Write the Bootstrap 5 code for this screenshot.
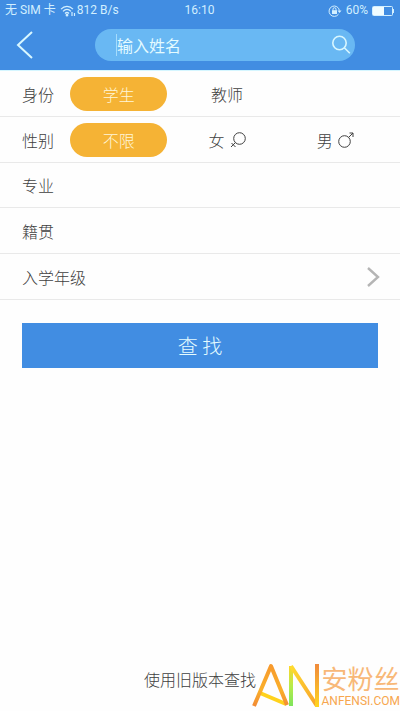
<!DOCTYPE html>
<html lang="zh-CN">
<head>
<meta charset="utf-8">
<meta name="viewport" content="width=device-width, initial-scale=1">
<title>查找</title>
<link href="https://cdn.jsdelivr.net/npm/bootstrap@5.3.0/dist/css/bootstrap.min.css" rel="stylesheet">
<style>
  body { font-family: "Noto Sans CJK SC", sans-serif; font-size: 16px; font-weight: 300; line-height: 24px; color: #404040; background: #fefefe; }
  .btn { font-size: 16px; font-weight: 300; }
  .top-area { background: #418de2; border-bottom: 1px solid #d5f6ff; }
  .status-line { height: 21px; padding: 0 6px 0 5px; font-family: Roboto, "Noto Sans CJK SC", sans-serif; font-size: 12px; font-weight: 400; line-height: 21px; color: #d2efff; display: grid; grid-template-columns: 1fr auto 1fr; }
  .search-line { height: 49px; padding: 0 45px 1px 16px; }
  .back-btn { width: 79px; color: #d8f7ff; }
  .search-pill { height: 32px; padding: 0 4px 0 21px; background: #69b8f3; }
  .search-pill input { height: 22px; border-left: 1px solid #a5dcfc; color: #e4fbff; outline: 0; min-width: 0; }
  .search-pill input::placeholder { color: #e4fbff; opacity: 1; }
  .search-pill button { color: #d8f7ff; }
  .form-line { height: 46px; padding: 0 16px 0 22px; border-bottom: 1px solid #e9e9e9; color: #404040; }
  .text-line { height: 45px; }
  .form-name { width: 48px; }
  .choices { gap: 11px; }
  .choice { height: 34px; flex: 1 1 0; cursor: pointer; gap: 5px; }
  .btn-check:checked + .choice { background: #f5b335; color: #fff6d8; }
  .line-input { color: inherit; outline: 0; min-width: 0; }
  .find-area { padding: 23px 22px; }
  .find-btn { height: 45px; background: #418de2; color: #e4fbff; font-size: 20px; }
  .old-link { color: #404040; margin-bottom: 20px; }
  .brand-mark { position: absolute; right: 0; bottom: 3px; gap: 2px; }
  .brand-cn { font-size: 26px; font-weight: 400; line-height: 32px; color: #f8b878; }
  .brand-en { font-family: Roboto, sans-serif; font-size: 12px; font-weight: 400; line-height: 14px; color: #f7a64e; }
</style>
</head>
<body class="min-vh-100 d-flex flex-column position-relative">
<header class="top-area">
  <div class="status-line">
    <div class="d-flex align-items-center text-nowrap">
      <span>无 SIM 卡</span>
      <svg class="ms-1" width="17" height="12" viewBox="0 0 17 12" fill="none" stroke="currentColor" stroke-width="1.2" aria-hidden="true"><path d="M1 4.200C4.500 .3 9.500 .3 13 4.200M3 6.400c2.500-2.700 5.500-2.700 8 0M5 8.500c1.300-1.300 2.700-1.300 4 0"/><circle cx="7" cy="10.200" r=".8" fill="currentColor"/><path d="M12 7v4M14.500 11V8"/></svg>
      <span>812 B/s</span>
    </div>
    <div>16:10</div>
    <div class="d-flex align-items-center justify-content-end">
      <svg width="14" height="12" viewBox="0 0 14 12" fill="none" stroke="currentColor" aria-hidden="true"><path d="M10.500 9.200A5.200 5.200 0 1 1 11.400 5.500"/><path d="M9.500 5.500h4l-2 2.500z" fill="currentColor" stroke="none"/><path d="M4 5.200h5v3.800H4z" fill="currentColor" stroke="none"/><path d="M5 5.500V4.200a1.500 1.500 0 0 1 3 0v1.300"/></svg>
      <span class="ms-1">60%</span>
      <svg class="ms-1" width="22" height="10" viewBox="0 0 22 10" aria-hidden="true"><rect x=".5" y=".5" width="20" height="9" rx="1" fill="none" stroke="currentColor"/><path d="M1 1h11v8H1z" fill="#f0fcff"/><path d="M21 3h1v4h-1z" fill="currentColor"/></svg>
    </div>
  </div>
  <form class="search-line d-flex align-items-center">
    <button type="button" class="back-btn btn p-0 border-0 text-start flex-shrink-0" aria-label="返回">
      <svg width="18" height="28" viewBox="0 0 18 28" fill="none" stroke="currentColor" stroke-width="2"><path d="M16 1 2 14l14 13"/></svg>
    </button>
    <div class="search-pill rounded-pill d-flex align-items-center flex-grow-1">
      <input type="text" class="flex-grow-1 border-end-0 border-top-0 border-bottom-0 bg-transparent p-0" placeholder="输入姓名" aria-label="输入姓名">
      <button type="submit" class="btn p-0 border-0 d-flex" aria-label="搜索">
        <svg width="20" height="20" viewBox="0 0 20 20" fill="none" stroke="currentColor" stroke-width="1.6"><circle cx="8.500" cy="8" r="6.700"/><path d="m13.300 12.800 5.500 5.500"/></svg>
      </button>
    </div>
  </form>
</header>
<main class="flex-grow-1">
  <form>
    <div class="form-line d-flex align-items-center" role="radiogroup" aria-labelledby="role-name">
      <span class="form-name" id="role-name">身份</span>
      <div class="choices d-flex flex-grow-1">
        <input class="btn-check" type="radio" name="role" id="role-student" checked>
        <label class="choice rounded-pill d-flex align-items-center justify-content-center" for="role-student">学生</label>
        <input class="btn-check" type="radio" name="role" id="role-teacher">
        <label class="choice rounded-pill d-flex align-items-center justify-content-center" for="role-teacher">教师</label>
        <span class="choice invisible"></span>
      </div>
    </div>
    <div class="form-line d-flex align-items-center" role="radiogroup" aria-labelledby="sex-name">
      <span class="form-name" id="sex-name">性别</span>
      <div class="choices d-flex flex-grow-1">
        <input class="btn-check" type="radio" name="sex" id="sex-any" checked>
        <label class="choice rounded-pill d-flex align-items-center justify-content-center" for="sex-any">不限</label>
        <input class="btn-check" type="radio" name="sex" id="sex-female">
        <label class="choice rounded-pill d-flex align-items-center justify-content-center" for="sex-female">女
          <svg width="16" height="16" viewBox="0 0 16 16" fill="none" stroke="currentColor" aria-hidden="true"><circle cx="9.500" cy="6.500" r="5.800"/><path d="M5.400 10.600 1 15M1.500 11l4 4"/></svg>
        </label>
        <input class="btn-check" type="radio" name="sex" id="sex-male">
        <label class="choice rounded-pill d-flex align-items-center justify-content-center" for="sex-male">男
          <svg width="16" height="16" viewBox="0 0 16 16" fill="none" stroke="currentColor" aria-hidden="true"><circle cx="6.500" cy="9.500" r="5.800"/><path d="M10.600 5.400 15 1M11.500 1H15v4"/></svg>
        </label>
      </div>
    </div>
    <div class="form-line text-line d-flex align-items-center">
      <label class="form-name" for="major">专业</label>
      <input class="line-input flex-grow-1 border-0 bg-transparent p-0" type="text" id="major">
    </div>
    <div class="form-line d-flex align-items-center">
      <label class="form-name" for="origin">籍贯</label>
      <input class="line-input flex-grow-1 border-0 bg-transparent p-0" type="text" id="origin">
    </div>
    <button type="button" class="form-line btn rounded-0 border-start-0 border-end-0 border-top-0 w-100 d-flex align-items-center justify-content-between">
      <span>入学年级</span>
      <svg class="me-1" width="15" height="20" viewBox="0 0 15 20" fill="none" stroke="#b5b5b5" stroke-width="2.400" aria-hidden="true"><path d="m3 1 10 9L3 19"/></svg>
    </button>
    <div class="find-area">
      <button type="submit" class="find-btn btn w-100 rounded-0 border-0 p-0">查 找</button>
    </div>
  </form>
</main>
<footer class="text-center d-flex justify-content-center">
  <a href="#" class="old-link text-decoration-none">使用旧版本查找</a>
</footer>
<div class="brand-mark d-flex align-items-end">
  <svg width="69" height="46" viewBox="0 0 69 46" fill="none" stroke-width="4" stroke-linejoin="round" aria-hidden="true">
    <defs>
      <linearGradient id="ga" x1="0" y1="0" x2="0" y2="1"><stop offset="0" stop-color="#f79a2d"/><stop offset=".6" stop-color="#fab02a"/><stop offset="1" stop-color="#f28a34"/></linearGradient>
      <linearGradient id="gb" x1="0" y1="0" x2="0" y2="1"><stop offset="0" stop-color="#ffd52a"/><stop offset=".5" stop-color="#b6ec4a"/><stop offset="1" stop-color="#7ee45c"/></linearGradient>
      <linearGradient id="gc" x1="0" y1="0" x2="0" y2="1"><stop offset="0" stop-color="#f08a3c"/><stop offset="1" stop-color="#ffd51e"/></linearGradient>
      <linearGradient id="gd" x1="0" y1="0" x2="1" y2="1"><stop offset="0" stop-color="#ffdc30"/><stop offset="1" stop-color="#f8a22b"/></linearGradient>
    </defs>
    <path d="M9 31 35 42" stroke="#ffd21c"/>
    <path d="M3 44 20 4l16 39" stroke="url(#ga)"/>
    <path d="M38 4h4v40h-4z" fill="url(#gb)"/>
    <path d="m40 4 26 40" stroke="url(#gd)"/>
    <path d="M64 2h4v43h-4z" fill="url(#gc)"/>
  </svg>
  <div class="d-flex flex-column">
    <span class="brand-cn">安粉丝</span>
    <span class="brand-en">ANFENSI.COM</span>
  </div>
</div>
<script src="https://cdn.jsdelivr.net/npm/bootstrap@5.3.0/dist/js/bootstrap.bundle.min.js"></script>
</body>
</html>
